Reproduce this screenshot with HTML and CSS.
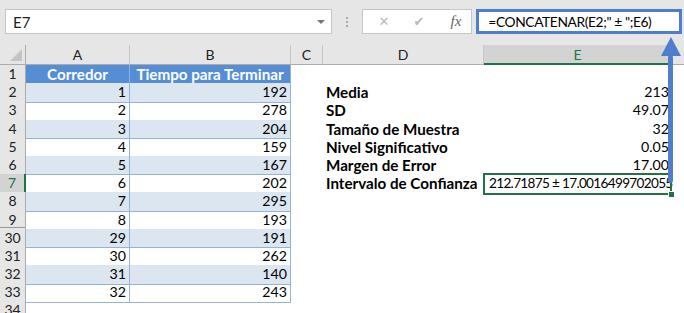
FILE: index.html
```html
<!DOCTYPE html>
<html lang="es">
<head>
    <meta charset="UTF-8">
    <meta name="viewport" content="width=device-width, initial-scale=1.0">
    <title>Intervalo de Confianza</title>
    <link rel="stylesheet" href="styles.css">
</head>
<body>
    <div class="formula-bar">
        <div class="name-box">
            <span>E7</span>
            <span class="caret"></span>
        </div>
        <div class="grip"></div>
        <div class="fx-box">
            <span class="fx-icon">&#x2715;</span>
            <span class="fx-icon check">&#x2714;</span>
            <span class="fx-label">fx</span>
        </div>
        <div class="formula">=CONCATENAR(E2;" ± ";E6)</div>
    </div>

    <div class="sheet">
        <div class="row head">
            <div class="rh corner"><span class="tri"></span></div>
            <div class="ch">A</div>
            <div class="ch">B</div>
            <div class="ch">C</div>
            <div class="ch">D</div>
            <div class="ch sel">E</div>
            <div class="ch end"></div>
        </div>
        <div class="row">
            <div class="rh">1</div>
            <div class="c t th">Corredor</div>
            <div class="c t th">Tiempo para Terminar</div>
            <div class="c"></div><div class="c"></div><div class="c"></div><div class="c"></div>
        </div>
        <div class="row">
            <div class="rh">2</div>
            <div class="c t band num">1</div>
            <div class="c t band num">192</div>
            <div class="c"></div>
            <div class="c lbl">Media</div>
            <div class="c num">213</div>
            <div class="c"></div>
        </div>
        <div class="row">
            <div class="rh">3</div>
            <div class="c t num">2</div>
            <div class="c t num">278</div>
            <div class="c"></div>
            <div class="c lbl">SD</div>
            <div class="c num">49.07</div>
            <div class="c"></div>
        </div>
        <div class="row">
            <div class="rh">4</div>
            <div class="c t band num">3</div>
            <div class="c t band num">204</div>
            <div class="c"></div>
            <div class="c lbl">Tamaño de Muestra</div>
            <div class="c num">32</div>
            <div class="c"></div>
        </div>
        <div class="row">
            <div class="rh">5</div>
            <div class="c t num">4</div>
            <div class="c t num">159</div>
            <div class="c"></div>
            <div class="c lbl">Nivel Significativo</div>
            <div class="c num">0.05</div>
            <div class="c"></div>
        </div>
        <div class="row">
            <div class="rh">6</div>
            <div class="c t band num">5</div>
            <div class="c t band num">167</div>
            <div class="c"></div>
            <div class="c lbl">Margen de Error</div>
            <div class="c num">17.00</div>
            <div class="c"></div>
        </div>
        <div class="row">
            <div class="rh sel">7</div>
            <div class="c t num">6</div>
            <div class="c t num">202</div>
            <div class="c"></div>
            <div class="c lbl">Intervalo de Confianza</div>
            <div class="c active">212.71875 ± 17.0016499702055<span class="handle"></span></div>
            <div class="c"></div>
        </div>
        <div class="row">
            <div class="rh">8</div>
            <div class="c t band num">7</div>
            <div class="c t band num">295</div>
            <div class="c"></div><div class="c"></div><div class="c"></div><div class="c"></div>
        </div>
        <div class="row">
            <div class="rh hidden-after">9</div>
            <div class="c t num">8</div>
            <div class="c t num">193</div>
            <div class="c"></div><div class="c"></div><div class="c"></div><div class="c"></div>
        </div>
        <div class="row">
            <div class="rh">30</div>
            <div class="c t band num">29</div>
            <div class="c t band num">191</div>
            <div class="c"></div><div class="c"></div><div class="c"></div><div class="c"></div>
        </div>
        <div class="row">
            <div class="rh">31</div>
            <div class="c t num">30</div>
            <div class="c t num">262</div>
            <div class="c"></div><div class="c"></div><div class="c"></div><div class="c"></div>
        </div>
        <div class="row">
            <div class="rh">32</div>
            <div class="c t band num">31</div>
            <div class="c t band num">140</div>
            <div class="c"></div><div class="c"></div><div class="c"></div><div class="c"></div>
        </div>
        <div class="row">
            <div class="rh">33</div>
            <div class="c t num">32</div>
            <div class="c t num">243</div>
            <div class="c"></div><div class="c"></div><div class="c"></div><div class="c"></div>
        </div>
        <div class="row">
            <div class="rh">34</div>
            <div class="c"></div><div class="c"></div><div class="c"></div><div class="c"></div><div class="c"></div><div class="c"></div>
        </div>
    </div>

    <svg class="arrow" width="22" height="150" viewBox="0 0 22 150">
        <polygon points="1,20 11,1 21,20" fill="#4f7fcc"/>
        <rect x="8" y="19" width="5" height="128" rx="2.5" fill="#4f7fcc"/>
    </svg>
</body>
</html>
```

FILE: styles.css
```css
body
{
    margin: 0;
    width: 684px;
    height: 313px;
    overflow: hidden;
    background: #fff;
    font-family: Lato, "Liberation Sans", sans-serif;
    color: #000;
}

/* formula bar */
.formula-bar
{
    display: flex;
    align-items: center;
    height: 45px;
    padding: 9px 2px 11px 5px;
    box-sizing: border-box;
    background: #e6e6e6;
}
.name-box
{
    width: 328px;
    height: 25px;
    box-sizing: border-box;
    border: 1px solid #c6c6c6;
    background: #fff;
    display: flex;
    align-items: center;
    justify-content: space-between;
    padding: 0 6px 0 7px;
    font-size: 15px;
    color: #222;
}
.caret
{
    width: 0;
    height: 0;
    border-left: 4px solid transparent;
    border-right: 4px solid transparent;
    border-top: 4px solid #777;
}
.grip
{
    width: 2px;
    height: 10px;
    margin: 0 14px 0 14px;
    background: repeating-linear-gradient(#aaa 0 2px, transparent 2px 4px);
}
.fx-box
{
    width: 110px;
    height: 25px;
    box-sizing: border-box;
    border: 1px solid #c6c6c6;
    background: #fff;
    display: flex;
    align-items: center;
    padding: 0 10px 0 15px;
    gap: 24px;
}
.fx-icon
{
    color: #b8b8b8;
    font-size: 13px;
    font-family: "DejaVu Sans", sans-serif;
}
.fx-label
{
    margin-left: auto;
    font-family: "Liberation Serif", serif;
    font-style: italic;
    font-size: 15px;
    color: #666;
}
.formula
{
    margin-left: 4px;
    width: 206px;
    height: 25px;
    box-sizing: border-box;
    border: 3px solid #4f7fcc;
    background: #fff;
    padding-left: 9px;
    font-size: 13.8px;
    letter-spacing: -0.4px;
    line-height: 19px;
    white-space: nowrap;
    overflow: hidden;
}

/* sheet grid */
.row
{
    display: grid;
    grid-template-columns: 26px 104px 161px 32px 161px 188px 1fr;
    height: 18.2px;
}
.row.head
{
    height: 20px;
    background: #e6e6e6;
}
.rh, .ch
{
    box-sizing: border-box;
    background: #e6e6e6;
    color: #222;
    font-size: 14px;
    text-align: center;
    border-right: 1px solid #c6c6c6;
    border-bottom: 1px solid #c6c6c6;
    line-height: 18px;
    overflow: hidden;
}
.ch
{
    border-bottom-color: #ababab;
    line-height: 19px;
}
.ch.end { border-right: none; }
.ch.sel
{
    background: #d3d3d3;
    color: #217346;
    border-bottom: 2px solid #217346;
}
.rh
{
    border-right-color: #ababab;
    line-height: 18px;
}
.rh.sel
{
    background: #d3d3d3;
    color: #217346;
    border-right: 2px solid #217346;
}
.rh.hidden-after
{
    border-bottom: 3px double #9a9a9a;
}
.corner
{
    position: relative;
    border-bottom-color: #ababab;
}
.tri
{
    position: absolute;
    right: 3px;
    bottom: 3px;
    width: 0;
    height: 0;
    border-left: 12px solid transparent;
    border-bottom: 12px solid #c4c4c4;
}

.c
{
    box-sizing: border-box;
    font-size: 14.2px;
    line-height: 18.5px;
    padding: 0 3px;
    white-space: nowrap;
}
.t
{
    border-right: 1px solid #95b3d7;
    border-bottom: 1px solid #95b3d7;
}
.th
{
    background: #558ed5;
    color: #fff;
    font-weight: bold;
    font-size: 15.2px;
    text-align: center;
    padding: 0;
}
.band { background: #dce6f1; }
.num { text-align: right; }
.lbl
{
    font-weight: bold;
    font-size: 15.2px;
    padding-left: 3px;
}
.active
{
    position: relative;
    padding-left: 5px;
    font-size: 13.6px;
    letter-spacing: -0.68px;
}
.active::after
{
    content: "";
    position: absolute;
    left: -1px;
    top: -1px;
    right: 0;
    bottom: -1px;
    border: 2px solid #217346;
}
.handle
{
    position: absolute;
    right: -3px;
    bottom: -4px;
    width: 5px;
    height: 5px;
    background: #217346;
    border: 1px solid #fff;
    z-index: 1;
}

.arrow
{
    position: absolute;
    left: 660px;
    top: 36px;
}
```
